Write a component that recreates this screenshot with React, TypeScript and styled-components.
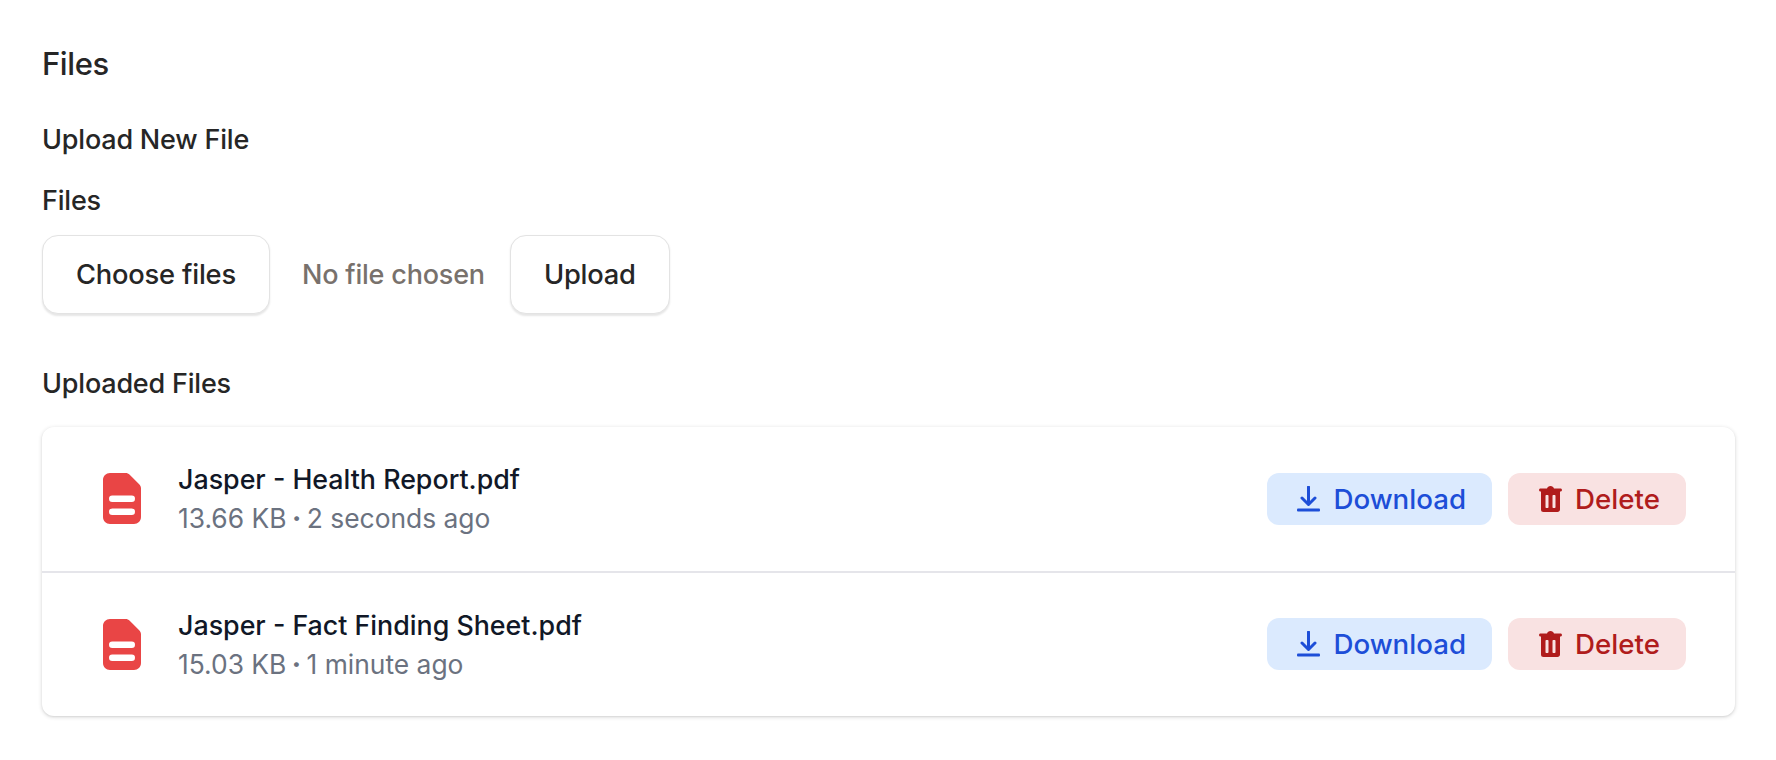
import React from "react";
import styled, { createGlobalStyle } from "styled-components";

const Global = createGlobalStyle`
  html, body { margin: 0; padding: 0; background: #fff; }
  body { font-family: Inter, "Noto Sans", "Liberation Sans", sans-serif; color: #1f1f1f; }
`;

const Page = styled.main`
  width: 1776px;
  height: 760px;
  box-sizing: border-box;
  padding: 46px 41px 0 42px;
  overflow: hidden;
`;
const Title = styled.h1`
  margin: 0 0 42px;
  font-size: 31px;
  line-height: 36px;
  font-weight: 500;
  letter-spacing: -0.4px;
  color: #262626;
`;
const Subtitle = styled.h2<{ $gap: number }>`
  margin: 0 0 ${(p) => p.$gap}px;
  font-size: 27px;
  line-height: 32px;
  font-weight: 500;
  letter-spacing: -0.2px;
  color: #262626;
`;
const FileLabel = styled.label`
  display: block;
  margin-bottom: 18px;
  font-size: 27px;
  line-height: 32px;
  font-weight: 500;
  letter-spacing: -0.2px;
  color: #262626;
`;
const UploadRow = styled.div`
  display: flex;
  align-items: center;
  margin-bottom: 54px;
`;
const OutlineButton = styled.button`
  height: 79px;
  padding: 0 33px;
  box-sizing: border-box;
  border: 1.5px solid #e3e3e3;
  border-radius: 16px;
  background: #fff;
  box-shadow: 0 1.5px 2px rgba(0, 0, 0, 0.1);
  font: 500 27.3px/32px Inter, sans-serif;
  letter-spacing: -0.2px;
  color: #262626;
`;
const NoFile = styled.span`
  margin: 0 25px 0 32px;
  font-size: 27px;
  font-weight: 500;
  letter-spacing: -0.2px;
  color: #78716c;
`;
const Card = styled.section`
  background: #fff;
  border-radius: 12px;
  box-shadow: 0 1px 4px rgba(0, 0, 0, 0.16), 0 1px 2px rgba(0, 0, 0, 0.06);
`;
const Row = styled.div`
  height: 144px;
  box-sizing: border-box;
  display: flex;
  align-items: center;
  padding: 0 49px 1px 61px;
  & + & {
    height: 145px;
    border-top: 2px solid #e5e5ea;
  }
`;
const DocIcon = styled.svg`
  width: 38px;
  height: 51px;
  flex: none;
  margin-right: 37px;
`;
const Info = styled.div`
  flex: 1;
`;
const Name = styled.div`
  font-size: 26.8px;
  line-height: 36px;
  font-weight: 500;
  color: #111827;
`;
const Meta = styled.div`
  margin-top: 3px;
  font-size: 26.4px;
  line-height: 36px;
  color: #6b7280;
`;
const Dot = styled.span`
  margin: 0 -2px;
  font-weight: 800;
`;
const Actions = styled.div`
  display: flex;
  gap: 16px;
`;
const ActionButton = styled.button<{ $kind: "download" | "delete" }>`
  height: 52px;
  display: flex;
  align-items: center;
  gap: 13px;
  box-sizing: border-box;
  padding: 0 26px 0 ${(p) => (p.$kind === "download" ? 30 : 31)}px;
  border: 0;
  border-radius: 12px;
  font: 500 27.7px/32px Inter, sans-serif;
  background: ${(p) => (p.$kind === "download" ? "#dbeafe" : "#f9e2e2")};
  color: ${(p) => (p.$kind === "download" ? "#1d4ed8" : "#b01c1c")};
`;
const ButtonIcon = styled.svg`
  width: 23px;
  height: 26px;
  flex: none;
`;

const files = [
  { name: "Jasper - Health Report.pdf", size: "13.66 KB", age: "2 seconds ago" },
  { name: "Jasper - Fact Finding Sheet.pdf", size: "15.03 KB", age: "1 minute ago" },
];

export default function App() {
  return (
    <Page>
      <Global />
      <Title>Files</Title>
      <Subtitle $gap={29}>Upload New File</Subtitle>
      <FileLabel>Files</FileLabel>
      <UploadRow>
        <OutlineButton>Choose files</OutlineButton>
        <NoFile>No file chosen</NoFile>
        <OutlineButton>Upload</OutlineButton>
      </UploadRow>
      <Subtitle $gap={27}>Uploaded Files</Subtitle>
      <Card>
        {files.map((f) => (
          <Row key={f.name}>
            <DocIcon viewBox="0 0 38 51">
              <path
                d="M7 0h15.500c1.600 0 3.100.6 4.200 1.800l9.500 9.500c1.200 1.100 1.800 2.600 1.800 4.200V44c0 3.900-3.100 7-7 7H7c-3.900 0-7-3.100-7-7V7c0-3.900 3.100-7 7-7z"
                fill="#e94545"
              />
              <rect x="6" y="22.500" width="26" height="6.500" rx="3.250" fill="#fff" />
              <rect x="6" y="35.500" width="26" height="6.500" rx="3.250" fill="#fff" />
            </DocIcon>
            <Info>
              <Name>{f.name}</Name>
              <Meta>
                {f.size} <Dot>·</Dot> {f.age}
              </Meta>
            </Info>
            <Actions>
              <ActionButton $kind="download">
                <ButtonIcon viewBox="0 0 23 26">
                  <path
                    d="M11.500 1v17M5 12l6.500 6.500L18 12"
                    fill="none"
                    stroke="currentColor"
                    strokeWidth="3"
                    strokeLinecap="round"
                    strokeLinejoin="round"
                  />
                  <rect x="0" y="22.500" width="23" height="3" rx="1" fill="currentColor" />
                </ButtonIcon>
                Download
              </ActionButton>
              <ActionButton $kind="delete">
                <ButtonIcon viewBox="0 0 23 26">
                  <path
                    fillRule="evenodd"
                    d="M8 2.500C8.400 1 9.800 0 11.500 0s3.100 1 3.500 2.500h6.500c.8 0 1.500.7 1.500 1.500s-.7 1.500-1.500 1.500H21v18c0 1.400-1.100 2.500-2.500 2.500h-14A2.500 2.500 0 0 1 2 23.500v-18h-.5C.7 5.500 0 4.800 0 4s.7-1.500 1.500-1.500H8zM6.500 10v11c0 .6.400 1 1 1h1c.6 0 1-.4 1-1V10c0-.6-.4-1-1-1h-1c-.6 0-1 .4-1 1zm7 0v11c0 .6.400 1 1 1h1c.6 0 1-.4 1-1V10c0-.6-.4-1-1-1h-1c-.6 0-1 .4-1 1z"
                    fill="currentColor"
                  />
                </ButtonIcon>
                Delete
              </ActionButton>
            </Actions>
          </Row>
        ))}
      </Card>
    </Page>
  );
}
